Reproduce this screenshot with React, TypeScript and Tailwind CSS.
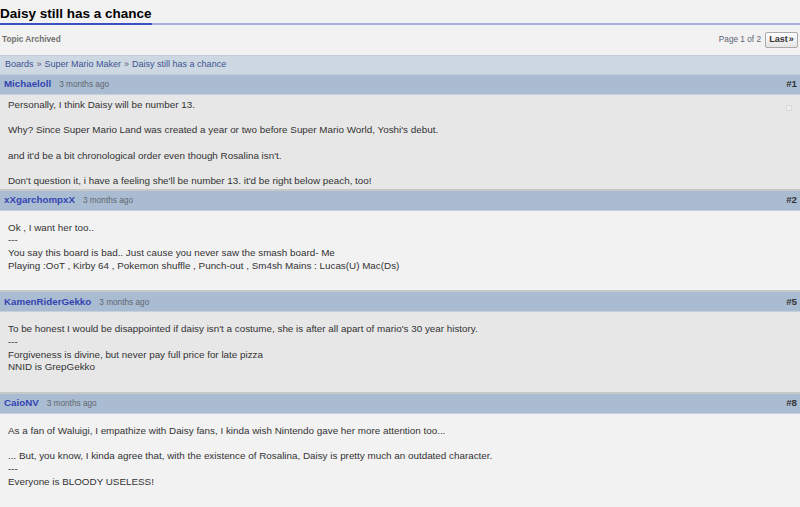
import React from 'react';

type Post = {
  id: number;
  author: string;
  age: string;
  lines: string[];
  compact?: boolean;
};

const posts: Post[] = [
  {
    id: 1,
    author: 'Michaeloll',
    age: '3 months ago',
    compact: true,
    lines: [
      'Personally, I think Daisy will be number 13.',
      '',
      "Why? Since Super Mario Land was created a year or two before Super Mario World, Yoshi's debut.",
      '',
      "and it'd be a bit chronological order even though Rosalina isn't.",
      '',
      "Don't question it, i have a feeling she'll be number 13. it'd be right below peach, too!",
    ],
  },
  {
    id: 2,
    author: 'xXgarchompxX',
    age: '3 months ago',
    lines: [
      'Ok , I want her too..',
      '---',
      'You say this board is bad.. Just cause you never saw the smash board- Me',
      'Playing :OoT , Kirby 64 , Pokemon shuffle , Punch-out , Sm4sh Mains : Lucas(U) Mac(Ds)',
    ],
  },
  {
    id: 5,
    author: 'KamenRiderGekko',
    age: '3 months ago',
    lines: [
      "To be honest I would be disappointed if daisy isn't a costume, she is after all apart of mario's 30 year history.",
      '---',
      'Forgiveness is divine, but never pay full price for late pizza',
      'NNID is GrepGekko',
    ],
  },
  {
    id: 8,
    author: 'CaioNV',
    age: '3 months ago',
    lines: [
      'As a fan of Waluigi, I empathize with Daisy fans, I kinda wish Nintendo gave her more attention too...',
      '',
      '... But, you know, I kinda agree that, with the existence of Rosalina, Daisy is pretty much an outdated character.',
      '---',
      'Everyone is BLOODY USELESS!',
    ],
  },
];

export default function App() {
  return (
    <div className="min-h-[507px] w-full overflow-hidden bg-[#f2f2f2] font-['Liberation_Sans',Arial,sans-serif] text-[#333]">
      <div className="flex items-end">
        <h1 className="border-b-2 border-[#3c4fc4] pt-[4px] text-[13.5px] font-bold leading-[19px] text-black">
          Daisy still has a chance
        </h1>
        <div className="flex-1 border-b-2 border-[#a9addf]" />
      </div>

      <div className="flex h-[30px] items-center justify-between pl-[2px] pr-[2px]">
        <span className="text-[8.25px] font-bold text-[#707070]">Topic Archived</span>
        <div className="flex items-center gap-[4px]">
          <span className="text-[8.25px] text-[#5d6275]">Page 1 of 2</span>
          <button
            type="button"
            className="flex h-[16px] w-[33px] items-center justify-center rounded-[2px] border border-[#a9a9a9] bg-gradient-to-b from-white to-[#e4e4e4] text-[9px] font-bold text-[#333]"
          >
            Last<span className="ml-[1px]">»</span>
          </button>
        </div>
      </div>

      <div className="flex h-[19px] items-center border-t border-[#c3ccd6] bg-[#cdd8e3] pl-[5px] text-[9px] text-[#3f5290]">
        <span>Boards</span>
        <span className="mx-[3px] text-[#5a5a7a]">»</span>
        <span>Super Mario Maker</span>
        <span className="mx-[3px] text-[#5a5a7a]">»</span>
        <span>Daisy still has a chance</span>
      </div>

      {posts.map((post, index) => (
        <div
          key={post.id}
          className={index === 0 ? 'border-t border-[#c2ccd6]' : 'border-t-2 border-[#c8c8c8]'}
        >
          <div className="flex h-[20px] items-center justify-between border-b border-[#c5d0dc] bg-[#aabcd1] pl-[4px] pr-[3px]">
            <div className="flex items-baseline gap-[8px]">
              <span className="text-[9.75px] font-bold text-[#3444b2]">{post.author}</span>
              <span className="text-[8.25px] text-[#5f6670]">{post.age}</span>
            </div>
            <span className="text-[9.75px] font-bold text-[#333]">#{post.id}</span>
          </div>
          <div
            className={
              index % 2 === 0
                ? 'relative bg-[#e7e7e7] pl-[8px] pr-[8px]'
                : 'relative bg-[#f2f2f2] pl-[8px] pr-[8px]'
            }
          >
            <div
              className={
                post.compact
                  ? 'pt-[4px] pb-[1px] text-[9.85px] leading-[12.67px]'
                  : 'pt-[11px] pb-[18px] text-[9.85px] leading-[12.67px]'
              }
            >
              {post.lines.map((line, i) => (
                <div key={i} className="whitespace-pre">
                  {line === '' ? '\u00a0' : line}
                </div>
              ))}
            </div>
            {post.compact ? (
              <div className="absolute right-[8px] top-[10px] h-[6px] w-[6px] border border-[#d9d9d9] bg-[#eeeeee]" />
            ) : null}
          </div>
        </div>
      ))}
    </div>
  );
}
